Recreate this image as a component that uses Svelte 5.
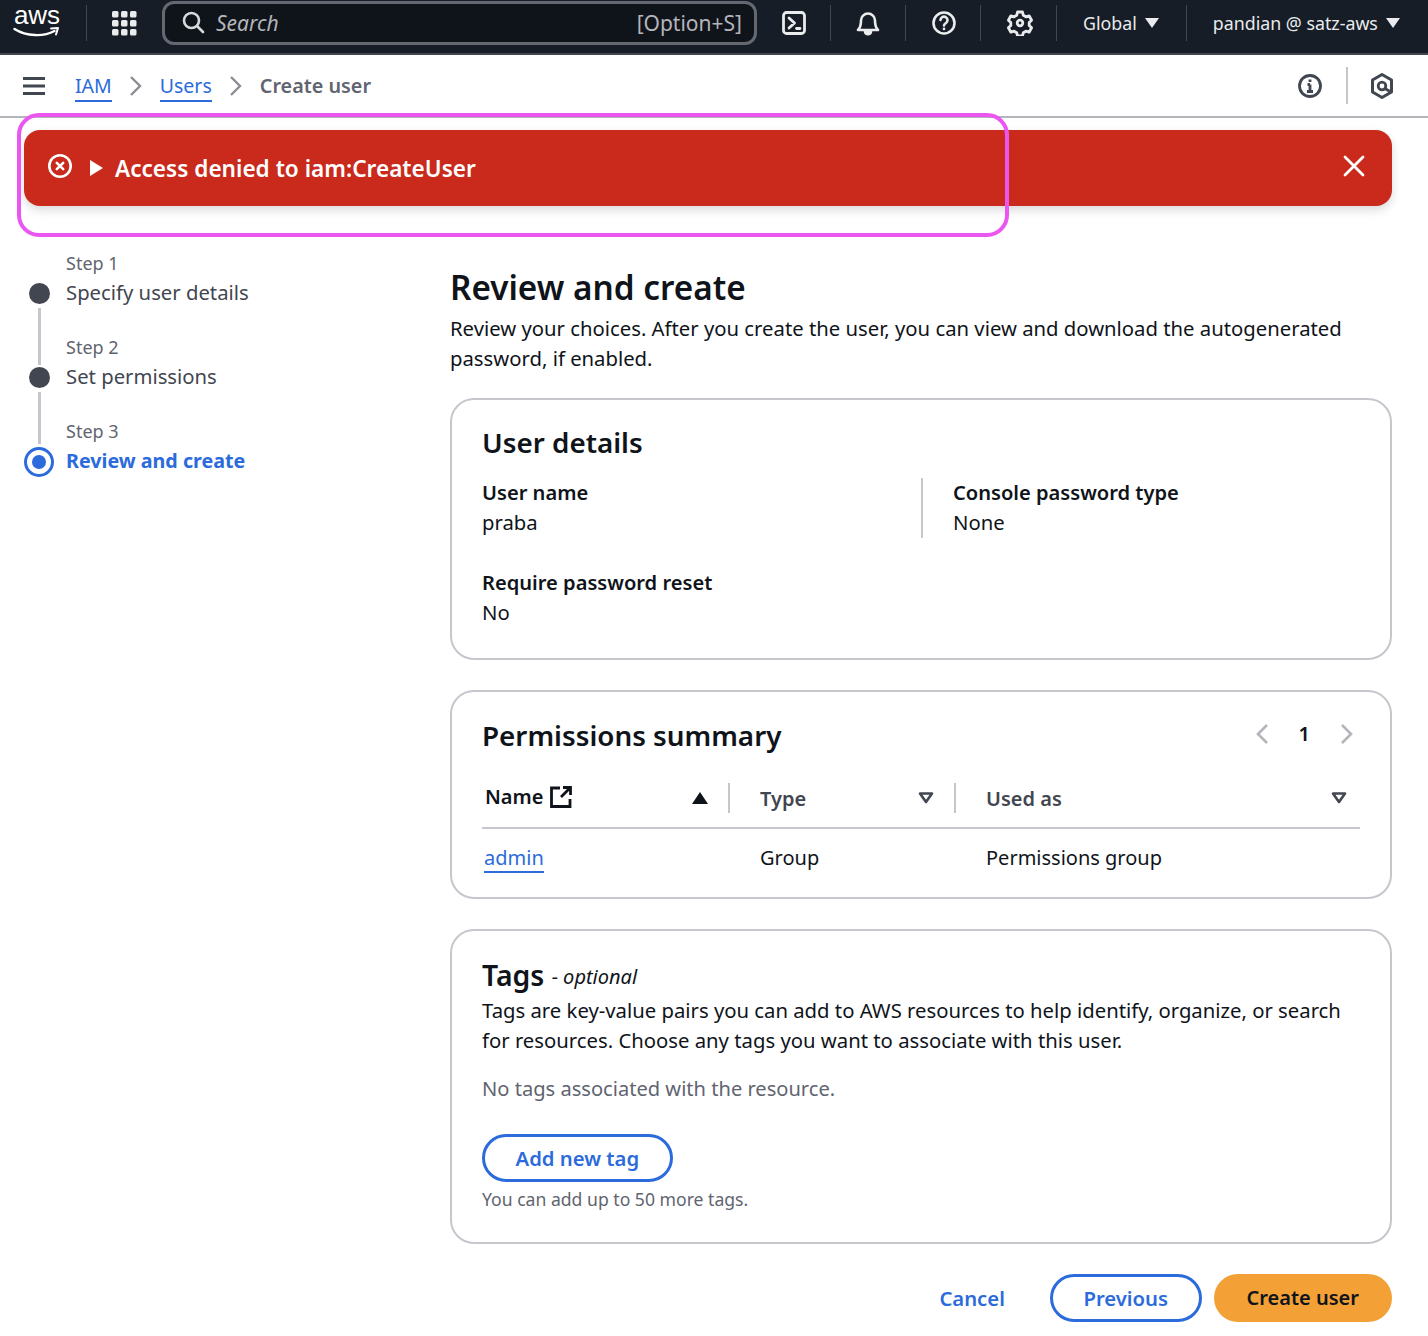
<script>
  const steps = [
    { label: 'Step 1', title: 'Specify user details' },
    { label: 'Step 2', title: 'Set permissions' },
    { label: 'Step 3', title: 'Review and create', active: true }
  ];
</script>

<div class="page">
  <header class="topnav">
    <div class="logo">
      <span class="logo-text">aws</span>
      <svg width="48" height="12" viewBox="0 0 48 12">
        <path d="M1.500 2c12 7.500 29 8 40 2" fill="none" stroke="#fff" stroke-width="2.400" stroke-linecap="round"/>
        <path d="M38 1.500l7-.5-2 6.500" fill="none" stroke="#fff" stroke-width="2" stroke-linecap="round" stroke-linejoin="round"/>
      </svg>
    </div>
    <span class="nav-sep sep-a"></span>
    <svg class="grid-icon" width="26" height="28" viewBox="0 0 26 28" fill="#e9ebed">
      {#each [2, 11, 20] as y}
        {#each [1, 10, 19] as x}
          <rect {x} {y} width="6.500" height="6.500" rx="1.500"/>
        {/each}
      {/each}
    </svg>
    <div class="search">
      <svg width="26" height="26" viewBox="0 0 26 26" fill="none" stroke="#d5dbdb" stroke-width="2.600" stroke-linecap="round">
        <circle cx="11.500" cy="10.500" r="7.500"/><path d="M17 16l6 6"/>
      </svg>
      <span class="search-text">Search</span>
      <span class="search-key">[Option+S]</span>
    </div>
    <svg class="nav-icon shell" width="26" height="26" viewBox="0 0 26 26" fill="none" stroke="#e9ebed" stroke-width="2.800" stroke-linecap="round" stroke-linejoin="round">
      <rect x="2.500" y="2.500" width="21" height="21" rx="3"/><path d="M8 8l5.500 5-5.500 5M15.500 18.500h3.500"/>
    </svg>
    <span class="nav-sep"></span>
    <svg class="nav-icon" width="26" height="26" viewBox="0 0 26 26" fill="none" stroke="#e9ebed" stroke-width="2.600" stroke-linejoin="round">
      <path d="M3 20c2.500-2.500 3-4.500 3-9.500a7 7 0 0 1 14 0c0 5 .5 7 3 9.500z"/>
      <path d="M10 21.500c.5 3.500 5.500 3.500 6 0z" fill="#e9ebed"/>
    </svg>
    <span class="nav-sep"></span>
    <svg class="nav-icon help" width="26" height="26" viewBox="0 0 26 26" fill="none" stroke="#e9ebed" stroke-width="2.600" stroke-linecap="round">
      <circle cx="13" cy="13" r="10.500"/><path d="M9.500 10a3.500 3.500 0 1 1 5.500 3c-1.500 1-2 1.500-2 2.500"/><path d="M13 18.800v.1"/>
    </svg>
    <span class="nav-sep"></span>
    <svg class="nav-icon gear" width="26" height="26" viewBox="0 0 26 26" fill="none" stroke="#e9ebed" stroke-width="2.800" stroke-linejoin="round">
      <path d="M10.500 2h5l.8 3.300 2.600 1.500 3.200-1 2.500 4.400-2.400 2.300v3l2.400 2.300-2.500 4.400-3.200-1-2.600 1.500-.8 3.300h-5l-.8-3.300-2.600-1.500-3.200 1-2.500-4.400 2.400-2.300v-3L1.400 10.200l2.500-4.400 3.200 1 2.600-1.500z"/>
      <circle cx="13" cy="13" r="2.800"/>
    </svg>
    <span class="nav-sep"></span>
    <span class="nav-menu global">Global <i class="caret"></i></span>
    <span class="nav-sep"></span>
    <span class="nav-menu account">pandian @ satz-aws <i class="caret"></i></span>
  </header>

  <div class="crumbs">
    <svg class="burger" width="24" height="20" viewBox="0 0 24 20" fill="#414750">
      <rect x="1" y="1" width="22" height="3"/><rect x="1" y="8.500" width="22" height="3"/><rect x="1" y="16" width="22" height="3"/>
    </svg>
    <a class="crumb" href="#iam">IAM</a>
    <svg class="chev" width="14" height="22" viewBox="0 0 14 22"><path d="M2 2l9 9-9 9" fill="none" stroke="#8c8c94" stroke-width="2.400"/></svg>
    <a class="crumb" href="#users">Users</a>
    <svg class="chev" width="14" height="22" viewBox="0 0 14 22"><path d="M2 2l9 9-9 9" fill="none" stroke="#8c8c94" stroke-width="2.400"/></svg>
    <span class="crumb-current">Create user</span>
    <svg class="info" width="26" height="26" viewBox="0 0 26 26" fill="none" stroke="#414750" stroke-width="2.800">
      <circle cx="13" cy="13" r="10.500"/><path d="M13 11.500v7M10 18.500h6M10.500 11.500H13"/><path d="M13 6.500v2.500"/>
    </svg>
    <span class="crumb-sep"></span>
    <svg class="hex" width="24" height="28" viewBox="0 0 24 28" fill="none" stroke="#414750">
      <path d="M12 2.500l9.500 5.500v12L12 25.500 2.500 20V8z" stroke-width="3" stroke-linejoin="round"/>
      <circle cx="12" cy="14" r="3.800" stroke-width="2.800"/>
      <path d="M14 16l6 3.500" stroke-width="2.800"/>
    </svg>
  </div>

  <div class="flash">
    <svg width="26" height="26" viewBox="0 0 26 26" fill="none" stroke="#fff" stroke-width="2.600" stroke-linecap="round">
      <circle cx="13" cy="13" r="10.700"/><path d="M9.800 9.800l6.400 6.400M16.200 9.800l-6.400 6.400"/>
    </svg>
    <svg class="flash-arrow" width="14" height="16" viewBox="0 0 14 16"><path d="M0 0l13 8-13 8z" fill="#fff"/></svg>
    <span class="flash-text">Access denied to iam:CreateUser</span>
    <svg class="flash-close" width="22" height="22" viewBox="0 0 22 22" fill="none" stroke="#fff" stroke-width="2.800" stroke-linecap="round">
      <path d="M2 2l18 18M20 2L2 20"/>
    </svg>
  </div>

  <div class="annotation"></div>

  <div class="layout">
    <nav class="steps">
      {#each steps as s, i}
        <div class="step" class:active={s.active}>
          <div class="step-label">{s.label}</div>
          <div class="step-title"><span class="dot"></span>{s.title}</div>
          {#if i < steps.length - 1}<span class="line"></span>{/if}
        </div>
      {/each}
    </nav>

    <main>
      <h1>Review and create</h1>
      <p class="intro">Review your choices. After you create the user, you can view and download the autogenerated password, if enabled.</p>

      <section class="card details">
        <h2>User details</h2>
        <div class="kv-grid">
          <div class="kv"><div class="k">User name</div><div>praba</div></div>
          <div class="kv second"><div class="k">Console password type</div><div>None</div></div>
          <div class="kv"><div class="k">Require password reset</div><div>No</div></div>
        </div>
      </section>

      <section class="card perms">
        <div class="perm-head">
          <h2>Permissions summary</h2>
          <div class="pager">
            <svg width="14" height="22" viewBox="0 0 14 22"><path d="M12 2l-9 9 9 9" fill="none" stroke="#b4b4bb" stroke-width="2.600"/></svg>
            <b>1</b>
            <svg width="14" height="22" viewBox="0 0 14 22"><path d="M2 2l9 9-9 9" fill="none" stroke="#b4b4bb" stroke-width="2.600"/></svg>
          </div>
        </div>
        <div class="thead">
          <div class="th name">
            <span class="th-name">Name</span>
            <svg class="ext" width="24" height="24" viewBox="0 0 24 24" fill="none" stroke="#0f141a" stroke-width="2.800">
              <path d="M11 3H2.500v18.500H21V14M14 2.500h7.500V10M21 3l-9 9"/>
            </svg>
            <svg class="sort" width="16" height="12" viewBox="0 0 16 12"><path d="M8 0l8 12H0z" fill="#0f141a"/></svg>
          </div>
          <div class="th type">
            <span class="th-label">Type</span>
            <svg class="sort" width="16" height="12" viewBox="0 0 16 12"><path d="M2 1.500h12L8 10z" fill="none" stroke="#424650" stroke-width="2.600" stroke-linejoin="round"/></svg>
          </div>
          <div class="th used">
            <span class="th-label">Used as</span>
            <svg class="sort" width="16" height="12" viewBox="0 0 16 12"><path d="M2 1.500h12L8 10z" fill="none" stroke="#424650" stroke-width="2.600" stroke-linejoin="round"/></svg>
          </div>
        </div>
        <div class="trow">
          <div class="td-name"><a href="#admin">admin</a></div>
          <div class="td-type">Group</div>
          <div class="td-used">Permissions group</div>
        </div>
      </section>

      <section class="card tags">
        <h2>Tags <em>- optional</em></h2>
        <p class="tag-desc">Tags are key-value pairs you can add to AWS resources to help identify, organize, or search for resources. Choose any tags you want to associate with this user.</p>
        <p class="no-tags">No tags associated with the resource.</p>
        <button class="btn outline add">Add new tag</button>
        <p class="hint">You can add up to 50 more tags.</p>
      </section>

      <div class="actions">
        <button class="btn link">Cancel</button>
        <button class="btn outline">Previous</button>
        <button class="btn primary">Create user</button>
      </div>
    </main>
  </div>
</div>

<style>
  :global(body) { margin: 0; background: #fff; }
  .page {
    position: relative;
    width: 1428px;
    height: 1336px;
    overflow: hidden;
    font-family: "Noto Sans", "Open Sans", sans-serif;
    font-size: 20.3px;
    line-height: 30px;
    color: #0f141a;
  }

  .topnav {
    box-sizing: border-box;
    height: 55px;
    background: #161d26;
    border-bottom: 2px solid #424650;
    display: flex;
    align-items: center;
    color: #e9ebed;
    padding: 0 0 8px 13px;
  }
  .logo { flex: none; width: 48px; display: flex; flex-direction: column; align-items: center; }
  .logo-text { font-family: "Liberation Sans", sans-serif; font-size: 26px; line-height: 30px; color: #fff; margin-top: -6px; }
  .logo svg { margin-top: -3px; }
  .nav-sep { width: 1px; height: 36px; background: #424650; flex: none; }
  .sep-a { margin-left: 25px; }
  .grid-icon { margin-left: 24px; flex: none; }
  .search {
    margin-left: 25px;
    flex: none;
    box-sizing: content-box;
    width: 562px;
    height: 38px;
    border: 3px solid #656871;
    border-radius: 12px;
    background: #0f141a;
    display: flex;
    align-items: center;
    padding: 0 12px 0 15px;
    color: #b4b4bb;
  }
  .search-text { font-style: italic; font-size: 21px; margin-left: 10px; }
  .search-key { margin-left: auto; font-size: 21px; }
  .nav-icon { flex: none; margin: 0 24px; }
  .shell { margin-right: 23px; }
  .help { margin-left: 25px; margin-right: 23px; }
  .gear { margin-left: 26px; margin-right: 23px; }
  .nav-menu { font-size: 17.8px; display: flex; align-items: center; }
  .global { padding: 0 27px 0 26px; }
  .account { padding-left: 26px; }
  .caret {
    width: 0;
    height: 0;
    margin-left: 8px;
    border-left: 7px solid transparent;
    border-right: 7px solid transparent;
    border-top: 10px solid #e9ebed;
  }

  .crumbs {
    height: 61px;
    border-bottom: 2px solid #b4b4bb;
    display: flex;
    align-items: center;
    padding-left: 22px;
    font-size: 19.5px;
  }
  .burger { flex: none; margin-right: 29px; }
  .crumb { color: #2b6bdb; text-decoration: none; border-bottom: 2px solid #2b6bdb; line-height: 29px; margin-top: 2px; }
  .chev { margin: 0 17px; }
  .crumb-current { color: #5f6470; font-weight: 600; font-size: 19.8px; }
  .info { margin-left: auto; margin-right: 23px; }
  .crumb-sep { width: 2px; height: 37px; background: #c6c6cd; }
  .hex { margin: 0 34px 0 22px; }

  .flash {
    margin: 12px 36px 0 24px;
    height: 76px;
    background: #c92a1c;
    border-radius: 16px;
    box-shadow: 0 4px 10px rgba(0, 7, 22, 0.15);
    display: flex;
    align-items: center;
    color: #fff;
    padding: 0 27px 0 23px;
  }
  .flash > svg:first-child { margin-top: -5px; }
  .flash-arrow { margin-left: 17px; }
  .flash-text { margin: 2px 0 0 11px; font-weight: 600; font-size: 22.6px; }
  .flash-close { margin-left: auto; margin-top: -4px; }

  .annotation {
    position: absolute;
    left: 17px;
    top: 113px;
    width: 984px;
    height: 116px;
    border: 4px solid #ec56f0;
    border-radius: 22px;
    pointer-events: none;
  }

  .layout {
    display: grid;
    grid-template-columns: 426px 942px;
    padding: 0 36px 0 24px;
  }

  .steps { padding-top: 42px; }
  .step { position: relative; height: 84px; padding-left: 42px; }
  .step-label { font-size: 18px; line-height: 30px; color: #5f6470; }
  .step-title { font-size: 20.3px; line-height: 30px; margin-top: -1px; color: #424650; }
  .dot {
    position: absolute;
    left: 5px;
    top: 35px;
    width: 21px;
    height: 21px;
    border-radius: 50%;
    background: #424650;
  }
  .line {
    position: absolute;
    left: 14px;
    top: 60px;
    width: 3px;
    height: 57px;
    background: #c6c6cd;
  }
  .step:nth-child(2) .line { height: 52px; }
  .active .step-title { color: #2b6bdb; font-weight: 700; font-size: 19.7px; margin-top: 0; }
  .active .dot {
    left: 0;
    top: 31px;
    width: 30px;
    height: 30px;
    box-sizing: border-box;
    padding: 5px;
    border: 3px solid #2b6bdb;
    background: #2b6bdb;
    background-clip: content-box;
  }

  main { padding-top: 60px; }
  h1 { margin: 0; font-size: 33.3px; line-height: 42px; font-weight: 600; }
  .intro { margin: 5px 0 0; }

  .card {
    border: 2px solid #c6c6cd;
    border-radius: 24px;
    padding: 0 30px;
    box-sizing: border-box;
  }
  h2 { margin: 0; font-size: 27.8px; line-height: 36px; font-weight: 600; }
  .details { margin-top: 25px; height: 262px; padding-top: 24px; }
  .kv-grid {
    display: grid;
    grid-template-columns: 439px 1fr;
    row-gap: 30px;
    margin-top: 18px;
  }
  .k { font-weight: 600; font-size: 20.1px; line-height: 29px; }
  .kv { min-height: 60px; }
  .second { border-left: 2px solid #c6c6cd; padding-left: 30px; }

  .perms { margin-top: 30px; height: 209px; padding-top: 25px; }
  .perm-head { display: flex; justify-content: space-between; align-items: center; }
  .pager { display: flex; align-items: center; gap: 30px; margin-right: 6px; margin-top: -2px; }
  .pager b { font-size: 20px; font-weight: 600; }
  .thead { display: flex; margin-top: 16px; height: 58px; border-bottom: 2px solid #c6c6cd; }
  .th {
    display: flex;
    align-items: center;
    height: 30px;
    margin-top: 14px;
    font-weight: 600;
    color: #424650;
    font-size: 20px;
    box-sizing: border-box;
  }
  .th + .th { border-left: 2px solid #c6c6cd; }
  .name { width: 246px; padding-left: 3px; color: #0f141a; }
  .th-name { margin-right: 6px; margin-top: -3px; }
  .th-label { margin-top: 2px; }
  .ext { margin-top: -2px; }
  .th .sort { margin-left: auto; margin-right: 20px; }
  .type { width: 226px; padding-left: 30px; }
  .used { flex: 1; padding-left: 30px; }
  .used .sort { margin-right: 13px; }
  .trow { display: flex; padding-top: 14px; font-size: 20px; }
  .td-name { width: 246px; padding-left: 2px; box-sizing: border-box; }
  .td-name a { color: #2b6bdb; text-decoration: none; border-bottom: 2px solid #2b6bdb; display: inline-block; line-height: 27px; }
  .td-type { width: 226px; padding-left: 32px; box-sizing: border-box; }
  .td-used { padding-left: 32px; }

  .tags { margin-top: 30px; height: 315px; padding-top: 26px; }
  .tags h2 { font-size: 28.4px; }
  h2 em { font-size: 20px; font-weight: 400; position: relative; top: -2px; }
  .tag-desc { margin: -2px 0 0; }
  .no-tags { margin: 19px 0 0; color: #5f6470; font-size: 20.1px; }
  .btn {
    font-family: inherit;
    font-size: 20.3px;
    font-weight: 600;
    line-height: 28px;
    height: 48px;
    border-radius: 24px;
    padding: 0 30.5px;
    background: #fff;
    cursor: pointer;
  }
  .outline { border: 3px solid #2b6bdb; color: #2b6bdb; }
  .add { margin-top: 30px; display: block; }
  .hint { margin: 4px 0 0; font-size: 17.6px; line-height: 26px; color: #5f6470; }

  .actions { display: flex; justify-content: flex-end; align-items: center; gap: 12px; margin-top: 30px; }
  .link { border: none; color: #2b6bdb; padding: 0 33px 0 0; }
  .primary { border: none; background: #f3a037; color: #0f141a; padding: 0 33px; font-size: 20px; }
</style>
